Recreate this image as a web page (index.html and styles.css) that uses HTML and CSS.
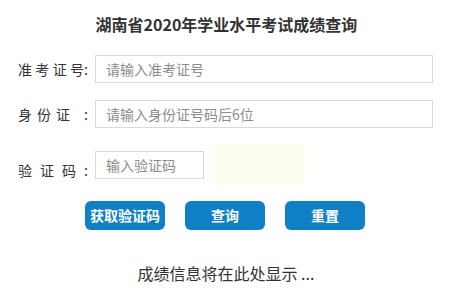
FILE: index.html
```html
<!DOCTYPE html>
<html lang="zh-CN">
<head>
<meta charset="utf-8">
<title>湖南省2020年学业水平考试成绩查询</title>
<link rel="stylesheet" href="styles.css">
</head>
<body>
<div class="page">
  <h1 class="title">湖南省2020年学业水平考试成绩查询</h1>
  <form class="form">
    <div class="row row-first">
      <label class="label"><span class="label-text w-ticket">准考证号</span><span class="colon">:</span></label>
      <input class="field field-wide" type="text" placeholder="请输入准考证号">
    </div>
    <div class="row row-second">
      <label class="label"><span class="label-text w-id">身份证</span><span class="colon">:</span></label>
      <input class="field field-wide" type="text" placeholder="请输入身份证号码后6位">
    </div>
    <div class="row row-captcha">
      <label class="label label-low"><span class="label-text w-code">验证码</span><span class="colon">:</span></label>
      <input class="field field-code" type="text" placeholder="输入验证码">
      <div class="captcha-img"></div>
    </div>
    <div class="buttons">
      <button type="button" class="btn">获取验证码</button>
      <button type="button" class="btn">查询</button>
      <button type="button" class="btn">重置</button>
    </div>
  </form>
  <p class="result">成绩信息将在此处显示 ...</p>
</div>
</body>
</html>
```

FILE: styles.css
```css
html, body {
  margin: 0;
  padding: 0;
  background: #ffffff;
}

body {
  font-family: "Noto Sans CJK SC", "Noto Sans", sans-serif;
  color: #333333;
}

.page {
  width: 456px;
}

.title {
  margin: 0;
  padding-top: 14px;
  font-size: 16px;
  line-height: 20px;
  font-weight: bold;
  text-align: center;
  color: #333333;
  padding-right: 3px;
}

.form {
  margin: 0;
}

.row {
  display: flex;
  align-items: center;
  padding-left: 18px;
}

.row-first {
  margin-top: 21px;
}

.row-second {
  margin-top: 17px;
}

.row-captcha {
  margin-top: 16px;
}

.label {
  display: flex;
  width: 72px;
  margin-right: 5px;
  font-size: 14px;
  line-height: 20px;
  color: #333333;
}

.label-low {
  padding-top: 10px;
}

.label-text {
  display: block;
  text-align: justify;
  text-align-last: justify;
  white-space: nowrap;
}

.w-ticket {
  width: 66px;
}

.w-id {
  width: 52px;
}

.w-code {
  width: 58px;
}

.colon {
  margin-left: auto;
  padding-right: 2px;
}

.field {
  box-sizing: border-box;
  height: 28px;
  margin: 0;
  padding: 0 10px;
  border: 1px solid #d9d9d9;
  border-radius: 0;
  font-family: "Noto Sans CJK SC", "Noto Sans", sans-serif;
  font-size: 14px;
  color: #333333;
  background: #ffffff;
  outline: none;
}

.field::placeholder {
  color: #8c8c8c;
}

.field-wide {
  width: 338px;
}

.field-code {
  width: 109px;
}

.captcha-img {
  width: 90px;
  height: 41px;
  margin-left: 11px;
  background: #fefef0;
}

.buttons {
  display: flex;
  gap: 20px;
  margin-top: 16px;
  padding-left: 85px;
}

.btn {
  width: 80px;
  height: 29px;
  margin: 0;
  padding: 0;
  border: none;
  border-radius: 6px;
  background: #0f7fc6;
  color: #ffffff;
  font-family: "Noto Sans CJK SC", "Noto Sans", sans-serif;
  font-size: 14px;
  font-weight: bold;
  line-height: 29px;
  cursor: pointer;
}

.result {
  margin: 33px 0 0 0;
  font-size: 16px;
  line-height: 20px;
  text-align: center;
  color: #333333;
  padding-right: 4px;
}
```
